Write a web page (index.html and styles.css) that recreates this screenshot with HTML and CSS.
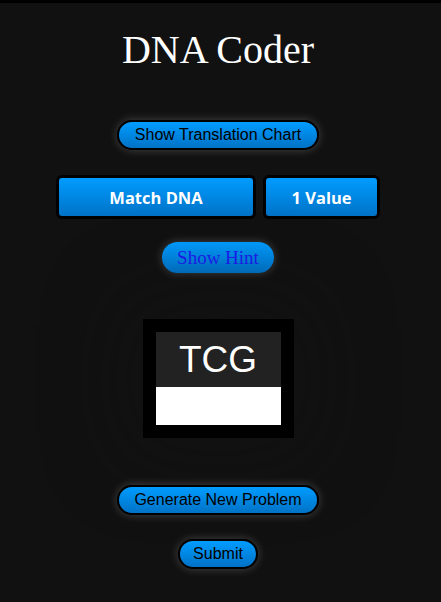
FILE: index.html
```html
<!DOCTYPE html>
<html>
<head>
<meta charset="utf-8">
<link rel="stylesheet" href="styles.css">
</head>
<body>
<main class="page">
  <h1 class="title">DNA Coder</h1>
  <button class="pill chart-btn">Show Translation Chart</button>
  <div class="mode-row">
    <button class="mode mode-match">Match DNA</button>
    <button class="mode mode-value">1 Value</button>
  </div>
  <button class="hint-btn">Show Hint</button>
  <div class="card">
    <div class="codon">TCG</div>
    <div class="answer"></div>
  </div>
  <button class="pill gen-btn">Generate New Problem</button>
  <button class="pill submit-btn">Submit</button>
</main>
</body>
</html>
```
FILE: styles.css
```css
html, body {
  margin: 0;
  padding: 0;
  background: #111111;
}
body {
  border-top: 3px solid #000;
  height: 599px;
  overflow: hidden;
}
.page {
  display: flex;
  flex-direction: column;
  align-items: center;
  padding-right: 5px;
}
.title {
  margin: 24px 0 0;
  font-family: "Liberation Serif", "Times New Roman", serif;
  font-weight: normal;
  font-size: 40px;
  line-height: 46px;
  color: #fff;
}
.pill {
  box-sizing: border-box;
  height: 30px;
  border: 2px solid #000;
  border-radius: 15px;
  background: linear-gradient(#009cff, #0072c6);
  font-family: "Liberation Sans", Arial, sans-serif;
  font-size: 16px;
  color: #000;
  padding: 0 13px;
  box-shadow: 0 0 10px rgba(255, 255, 255, 0.22);
}
.chart-btn {
  margin-top: 47px;
  width: 202px;
}
.mode-row {
  margin-top: 25px;
  display: flex;
  gap: 7px;
}
.mode {
  box-sizing: border-box;
  height: 44px;
  border: 3px solid #000;
  border-radius: 6px;
  background: linear-gradient(#009cff, #0072c6);
  font-family: "Open Sans", sans-serif;
  font-weight: bold;
  font-size: 16.5px;
  color: #fff;
}
.mode-match { width: 200px; }
.mode-value { width: 117px; }
.hint-btn {
  margin-top: 23px;
  width: 112px;
  height: 31px;
  border: none;
  border-radius: 16px;
  background: linear-gradient(#009cff, #0072c6);
  font-family: "Liberation Serif", "Times New Roman", serif;
  font-size: 19px;
  color: #1c1cf0;
  box-shadow: 0 0 10px rgba(255, 255, 255, 0.22);
}
.card {
  margin-top: 46px;
  width: 125px;
  padding: 13px;
  background: #000;
  box-shadow: 0 0 80px 20px rgba(20, 20, 20, 0.35);
}
.codon {
  height: 55px;
  background: #222;
  color: #fff;
  font-family: "Liberation Sans", Arial, sans-serif;
  font-size: 37px;
  line-height: 55px;
  text-align: center;
}
.answer {
  height: 38px;
  background: #fff;
}
.gen-btn {
  margin-top: 47px;
  width: 202px;
}
.submit-btn {
  margin-top: 24px;
  width: 80px;
  padding: 0;
}
```
